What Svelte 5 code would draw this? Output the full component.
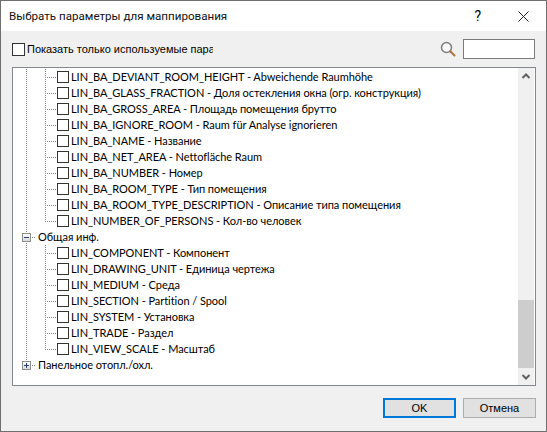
<script>
  const group1 = [
    "LIN_BA_DEVIANT_ROOM_HEIGHT - Abweichende Raumhöhe",
    "LIN_BA_GLASS_FRACTION - Доля остекления окна (огр. конструкция)",
    "LIN_BA_GROSS_AREA - Площадь помещения брутто",
    "LIN_BA_IGNORE_ROOM - Raum für Analyse ignorieren",
    "LIN_BA_NAME - Название",
    "LIN_BA_NET_AREA - Nettofläche Raum",
    "LIN_BA_NUMBER - Номер",
    "LIN_BA_ROOM_TYPE - Тип помещения",
    "LIN_BA_ROOM_TYPE_DESCRIPTION - Описание типа помещения",
    "LIN_NUMBER_OF_PERSONS - Кол-во человек"
  ];
  const group2 = [
    "LIN_COMPONENT - Компонент",
    "LIN_DRAWING_UNIT - Единица чертежа",
    "LIN_MEDIUM - Среда",
    "LIN_SECTION - Partition / Spool",
    "LIN_SYSTEM - Установка",
    "LIN_TRADE - Раздел",
    "LIN_VIEW_SCALE - Масштаб"
  ];
</script>

<div class="window">
  <header class="titlebar">
    <span class="title">Выбрать параметры для маппирования</span>
    <span class="help">?</span>
    <svg class="close" width="11" height="11" viewBox="0 0 11 11">
      <path d="M0.5 0.5L10.5 10.5M10.5 0.5L0.5 10.5" stroke="#222" stroke-width="1" fill="none" />
    </svg>
  </header>

  <div class="body">
    <div class="filter">
      <label class="only-used">
        <span class="check"></span>
        <span class="only-text">Показать только используемые параметры</span>
      </label>
      <svg class="search" width="16" height="16" viewBox="0 0 16 16">
        <circle cx="6.5" cy="6.5" r="5" fill="#f7f7f7" stroke="#7d7d7d" stroke-width="1.5" />
        <path d="M10.5 10.5L14.5 14.5" stroke="#a8743c" stroke-width="2" stroke-linecap="round" />
      </svg>
      <div class="search-box"></div>
    </div>

    <div class="tree">
      <div class="rows">
        {#each group1 as item, i}
          <div class="row child" class:last={i === group1.length - 1}>
            <span class="check"></span>{item}
          </div>
        {/each}
        <div class="row parent">
          <span class="expander"><i class="h"></i></span><span class="stub"></span>Общая инф.
        </div>
        {#each group2 as item, i}
          <div class="row child" class:last={i === group2.length - 1}>
            <span class="check"></span>{item}
          </div>
        {/each}
        <div class="row parent end">
          <span class="expander"><i class="h"></i><i class="v"></i></span><span class="stub"></span>Панельное отопл./охл.
        </div>
      </div>
      <div class="scrollbar">
        <svg width="16" height="17" viewBox="0 0 16 17">
          <path d="M4.5 10L8 6.5L11.5 10" stroke="#606060" stroke-width="2" fill="none" />
        </svg>
        <div class="track"><div class="thumb"></div></div>
        <svg width="16" height="17" viewBox="0 0 16 17">
          <path d="M4.5 7L8 10.5L11.5 7" stroke="#606060" stroke-width="2" fill="none" />
        </svg>
      </div>
    </div>

    <div class="buttons">
      <button class="btn primary">OK</button>
      <button class="btn">Отмена</button>
    </div>
  </div>
</div>

<style>
  :global(body) {
    margin: 0;
    background: #6f6f6f;
  }
  .window {
    width: 545px;
    height: 430px;
    margin: 1px;
    display: flex;
    flex-direction: column;
    font-family: "Liberation Sans", Arial, sans-serif;
    font-size: 11px;
    color: #000;
    background: #f0f0f0;
  }
  .titlebar {
    height: 30px;
    flex: none;
    background: #fff;
    display: flex;
    align-items: center;
    padding-left: 8px;
    font-family: Roboto, sans-serif;
    font-size: 11.6px;
  }
  .title {
    flex: 1;
    color: #111;
  }
  .help {
    font-size: 14px;
    margin-right: 37px;
  }
  .close {
    margin-right: 17px;
  }
  .body {
    flex: 1;
    display: flex;
    flex-direction: column;
    padding: 0 10px 0 11px;
    min-height: 0;
  }
  .filter {
    height: 36px;
    flex: none;
    display: flex;
    align-items: center;
    padding-right: 1px;
  }
  .only-used {
    display: flex;
    align-items: center;
    width: 201px;
    overflow: hidden;
    white-space: nowrap;
    flex: none;
  }
  .only-used .check {
    width: 11px;
    height: 11px;
    margin-right: 2px;
    flex: none;
  }
  .search {
    margin-left: auto;
    margin-right: 7px;
  }
  .search-box {
    width: 70px;
    height: 18px;
    border: 1px solid #7a7a7a;
    background: #fff;
  }
  .check {
    display: inline-block;
    width: 10px;
    height: 10px;
    border: 1px solid #333;
    background: #fff;
    box-sizing: content-box;
  }
  .tree {
    height: 319px;
    box-sizing: border-box;
    flex: none;
    display: flex;
    border: 1px solid #828790;
    background: #fff;
  }
  .rows {
    flex: 1;
    padding-top: 1px;
    min-width: 0;
    font-family: Lato, "Liberation Sans", sans-serif;
    letter-spacing: -0.05px;
  }
  /* Lato sits a pixel low, so the text goes up and the boxes stay on the row centre */
  .row {
    height: 14px;
    padding-bottom: 2px;
    display: flex;
    align-items: center;
    white-space: pre;
    position: relative;
  }
  .row > span {
    position: relative;
    top: 1px;
  }
  .row.child {
    padding-left: 44px;
  }
  .row.child .check {
    margin-right: 2px;
  }
  .row.child::before {
    content: "";
    position: absolute;
    left: 32px;
    top: 0;
    bottom: 0;
    width: 11px;
    background:
      repeating-linear-gradient(to bottom, #888 0 1px, transparent 1px 2px) left top / 1px 100% no-repeat,
      repeating-linear-gradient(to right, #888 0 1px, transparent 1px 2px) left 8px / 100% 1px no-repeat;
  }
  .row.child.last::before {
    background:
      repeating-linear-gradient(to bottom, #888 0 1px, transparent 1px 2px) left top / 1px 8px no-repeat,
      repeating-linear-gradient(to right, #888 0 1px, transparent 1px 2px) left 8px / 100% 1px no-repeat;
  }
  .row.child::after {
    content: "";
    position: absolute;
    left: 13px;
    top: 0;
    bottom: 0;
    width: 1px;
    background: repeating-linear-gradient(to bottom, #888 0 1px, transparent 1px 2px);
  }
  .row.parent {
    padding-left: 9px;
  }
  .row.parent::before {
    content: "";
    position: absolute;
    left: 13px;
    top: 0;
    bottom: 0;
    width: 1px;
    background: repeating-linear-gradient(to bottom, #888 0 1px, transparent 1px 2px);
  }
  .row.parent.end::before {
    bottom: 12px;
  }
  .expander {
    width: 7px;
    height: 7px;
    border: 1px solid #8e8f8f;
    background: linear-gradient(#fff, #d9d9d9);
    z-index: 1;
    flex: none;
    box-sizing: content-box;
  }
  .expander i {
    position: absolute;
    background: #2a3f7a;
  }
  .expander .h {
    left: 1px;
    top: 3px;
    width: 5px;
    height: 1px;
  }
  .expander .v {
    left: 3px;
    top: 1px;
    width: 1px;
    height: 5px;
  }
  .stub {
    width: 4px;
    height: 1px;
    margin: 0 2px 0 1px;
    background: repeating-linear-gradient(to right, #888 0 1px, transparent 1px 2px);
  }
  .scrollbar {
    width: 16px;
    margin-right: 1px;
    flex: none;
    display: flex;
    flex-direction: column;
    background: #f0f0f0;
  }
  .track {
    flex: 1;
    display: flex;
    flex-direction: column;
    justify-content: flex-end;
  }
  .thumb {
    height: 68px;
    background: #cdcdcd;
  }
  .buttons {
    display: flex;
    justify-content: flex-end;
    gap: 7px;
    padding-top: 12px;
  }
  .btn {
    width: 73px;
    height: 20px;
    box-sizing: border-box;
    padding: 0;
    border: 1px solid #adadad;
    background: #e1e1e1;
    font: inherit;
    color: #000;
  }
  .btn.primary {
    border: 2px solid #0078d7;
  }
</style>
